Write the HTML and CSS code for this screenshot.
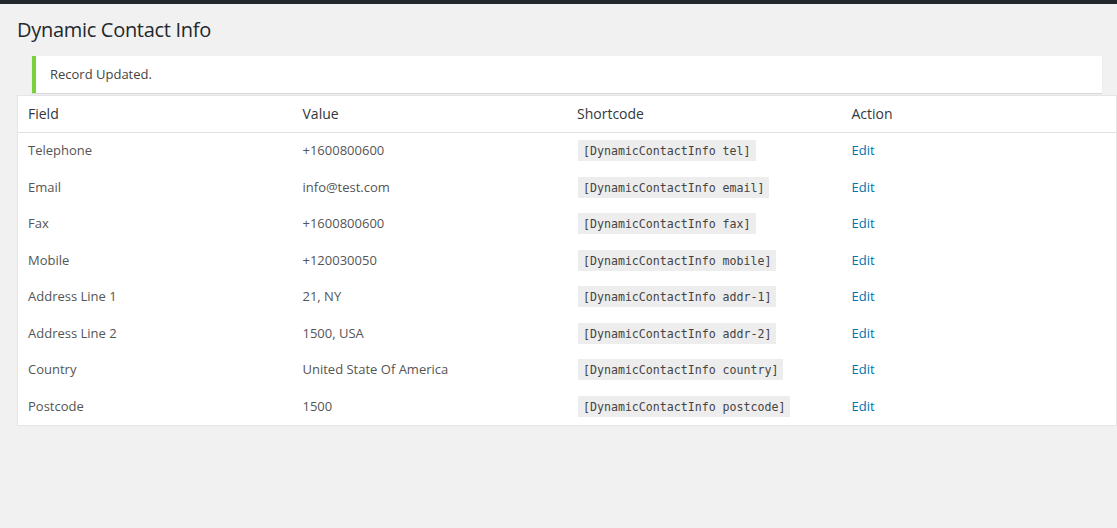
FILE: index.html
```html
<!DOCTYPE html>
<html>
<head>
<meta charset="utf-8">
<title>Dynamic Contact Info</title>
<link rel="stylesheet" href="styles.css">
</head>
<body>
<div class="adminbar"></div>
<div class="wrap">
  <h1 class="page-title">Dynamic Contact Info</h1>
  <div class="notice"><p>Record Updated.</p></div>
  <table class="widefat">
    <thead>
      <tr><th>Field</th><th>Value</th><th>Shortcode</th><th>Action</th></tr>
    </thead>
    <tbody>
      <tr><td>Telephone</td><td>+1600800600</td><td><code>[DynamicContactInfo tel]</code></td><td><a href="#">Edit</a></td></tr>
      <tr><td>Email</td><td>info@test.com</td><td><code>[DynamicContactInfo email]</code></td><td><a href="#">Edit</a></td></tr>
      <tr><td>Fax</td><td>+1600800600</td><td><code>[DynamicContactInfo fax]</code></td><td><a href="#">Edit</a></td></tr>
      <tr><td>Mobile</td><td>+120030050</td><td><code>[DynamicContactInfo mobile]</code></td><td><a href="#">Edit</a></td></tr>
      <tr><td>Address Line 1</td><td>21, NY</td><td><code>[DynamicContactInfo addr-1]</code></td><td><a href="#">Edit</a></td></tr>
      <tr><td>Address Line 2</td><td>1500, USA</td><td><code>[DynamicContactInfo addr-2]</code></td><td><a href="#">Edit</a></td></tr>
      <tr><td>Country</td><td>United State Of America</td><td><code>[DynamicContactInfo country]</code></td><td><a href="#">Edit</a></td></tr>
      <tr><td>Postcode</td><td>1500</td><td><code>[DynamicContactInfo postcode]</code></td><td><a href="#">Edit</a></td></tr>
    </tbody>
  </table>
</div>
</body>
</html>
```

FILE: styles.css
```css
html, body {
  margin: 0;
  padding: 0;
}
body {
  background: #f1f1f1;
  color: #444;
  font-family: "Open Sans", "Noto Sans", sans-serif;
  font-size: 13px;
  line-height: 1.4em;
}
.adminbar {
  height: 4px;
  background: #23282d;
}
.wrap {
  padding-left: 17px;
}
.page-title {
  margin: 11px 0 12px;
  font-size: 20px;
  letter-spacing: -0.3px;
  font-weight: 400;
  line-height: 29px;
  color: #23282d;
}
.notice {
  margin: 0 15px 2px;
  background: #fff;
  border-left: 4px solid #7ad03a;
  box-shadow: 0 1px 1px rgba(0, 0, 0, 0.1);
  padding: 9px 14px;
}
.notice p {
  margin: 0;
  font-size: 13px;
  line-height: 19px;
  color: #444;
}
.widefat {
  width: 100%;
  margin-top: 0;
  border: 1px solid #e5e5e5;
  border-spacing: 0;
  background: #fff;
  box-shadow: 0 1px 1px rgba(0, 0, 0, 0.04);
  table-layout: fixed;
}
.widefat th {
  text-align: left;
  font-weight: 400;
  font-size: 14px;
  line-height: 20px;
  color: #32373c;
  padding: 8px 10px;
  border-bottom: 1px solid #e1e1e1;
}
.widefat td {
  font-size: 13px;
  line-height: 20px;
  color: #555;
  padding: 7px 10px 9.5px;
  vertical-align: top;
}
.widefat code {
  font-family: "DejaVu Sans Mono", "Liberation Mono", monospace;
  font-size: 11.6px;
  line-height: 16px;
  background: #ededed;
  color: #444;
  padding: 4px 5px 3px;
  margin: 0 1px;
}
.widefat a {
  color: #0073aa;
  text-decoration: none;
}
```
